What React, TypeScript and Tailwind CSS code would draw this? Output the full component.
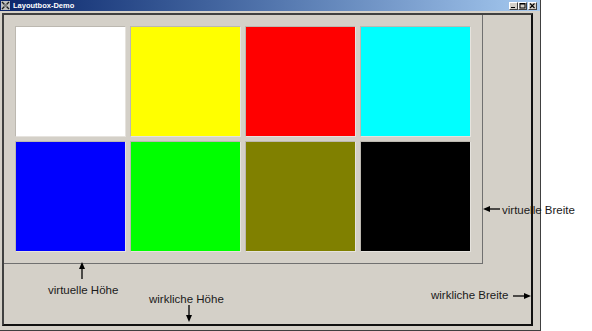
import React from "react";

const colors = ["#ffffff", "#ffff00", "#ff0000", "#00ffff", "#0000ff", "#00ff00", "#808000", "#000000"];

function TitleButton({ kind }: { kind: "min" | "max" | "close" }) {
  return (
    <div className="w-[9px] h-[8px] bg-[#d4d0c8] border-t border-l border-t-white border-l-white border-r border-b border-r-[#404040] border-b-[#404040] flex items-center justify-center">
      <svg width="7" height="6" viewBox="0 0 7 6">
        {kind === "min" && <rect x="1" y="4" width="4" height="1" fill="#000" />}
        {kind === "max" && (
          <>
            <rect x="1" y="0.5" width="5" height="4.5" fill="none" stroke="#000" strokeWidth="1" />
            <rect x="1" y="0" width="5" height="1.5" fill="#000" />
          </>
        )}
        {kind === "close" && (
          <path d="M1 0.5 L5.5 5 M5.5 0.5 L1 5" stroke="#000" strokeWidth="1.1" />
        )}
      </svg>
    </div>
  );
}

export default function App() {
  const font = { fontFamily: '"Liberation Sans", Arial, sans-serif' };
  return (
    <div className="relative w-[592px] h-[331px] bg-white overflow-hidden" style={font}>
      <div className="w-[541px] h-[331px] bg-[#d4d0c8] border-r border-b border-[#404040] flex flex-col">
        <div className="h-[11px] flex items-center bg-gradient-to-r from-[#0a246a] to-[#a6caf0] pl-[1px] pr-[3px]">
          <svg width="9" height="9" viewBox="0 0 9 9" className="shrink-0">
            <rect x="0" y="0" width="9" height="9" fill="#c0c0c0" />
            <path d="M1 1 L4 4 M8 1 L5 4 M1 8 L4 5 M8 8 L5 5" stroke="#202020" strokeWidth="1.4" />
            <rect x="3" y="3" width="3" height="3" fill="#808080" />
          </svg>
          <span className="ml-[3px] text-[7.5px] font-bold text-white leading-none tracking-[0px]">Layoutbox-Demo</span>
          <div className="ml-auto flex items-center">
            <TitleButton kind="min" />
            <TitleButton kind="max" />
            <div className="ml-[1px]">
              <TitleButton kind="close" />
            </div>
          </div>
        </div>
        <div className="flex-1 pl-[2px] pt-[2px] pr-[7px] pb-[4px]">
          <div className="h-full border-2 border-t-[#404040] border-l-[#404040] border-r-[#101010] border-b-[#101010]">
            <div className="w-[479px] border-r border-b border-[#707070] p-[11px]">
              <div className="grid grid-cols-[repeat(4,111px)] grid-rows-[repeat(2,111px)] gap-[4px]">
                {colors.map((c) => (
                  <div
                    key={c}
                    className="border border-t-[#bcb8b0] border-l-[#bcb8b0] border-r-[#e6e3de] border-b-[#e6e3de]"
                    style={{ backgroundColor: c }}
                  />
                ))}
              </div>
            </div>
          </div>
        </div>
      </div>

      {/* annotations */}
      <svg className="absolute left-0 top-0" width="592" height="331" viewBox="0 0 592 331">
        <g stroke="#000" strokeWidth="1.3" fill="#000">
          <line x1="82" y1="268" x2="82" y2="279" />
          <polygon points="82,262 79,269 85,269" stroke="none" />
          <line x1="189" y1="305" x2="189" y2="316" />
          <polygon points="189,322 186,315 192,315" stroke="none" />
          <line x1="489" y1="209" x2="500" y2="209" />
          <polygon points="483,209 490,206 490,212" stroke="none" />
          <line x1="513" y1="296" x2="525" y2="296" />
          <polygon points="531,296 524,293 524,299" stroke="none" />
        </g>
      </svg>
      <span className="absolute left-[48px] top-[285px] text-[11.5px] leading-none text-[#1a1a1a] whitespace-nowrap">virtuelle Höhe</span>
      <span className="absolute left-[149px] top-[294px] text-[11.5px] leading-none text-[#1a1a1a] whitespace-nowrap">wirkliche Höhe</span>
      <span className="absolute left-[502px] top-[205px] text-[11.5px] leading-none text-[#1a1a1a] whitespace-nowrap">virtuelle Breite</span>
      <span className="absolute left-[431px] top-[290px] text-[11.5px] leading-none text-[#1a1a1a] whitespace-nowrap">wirkliche Breite</span>
    </div>
  );
}
